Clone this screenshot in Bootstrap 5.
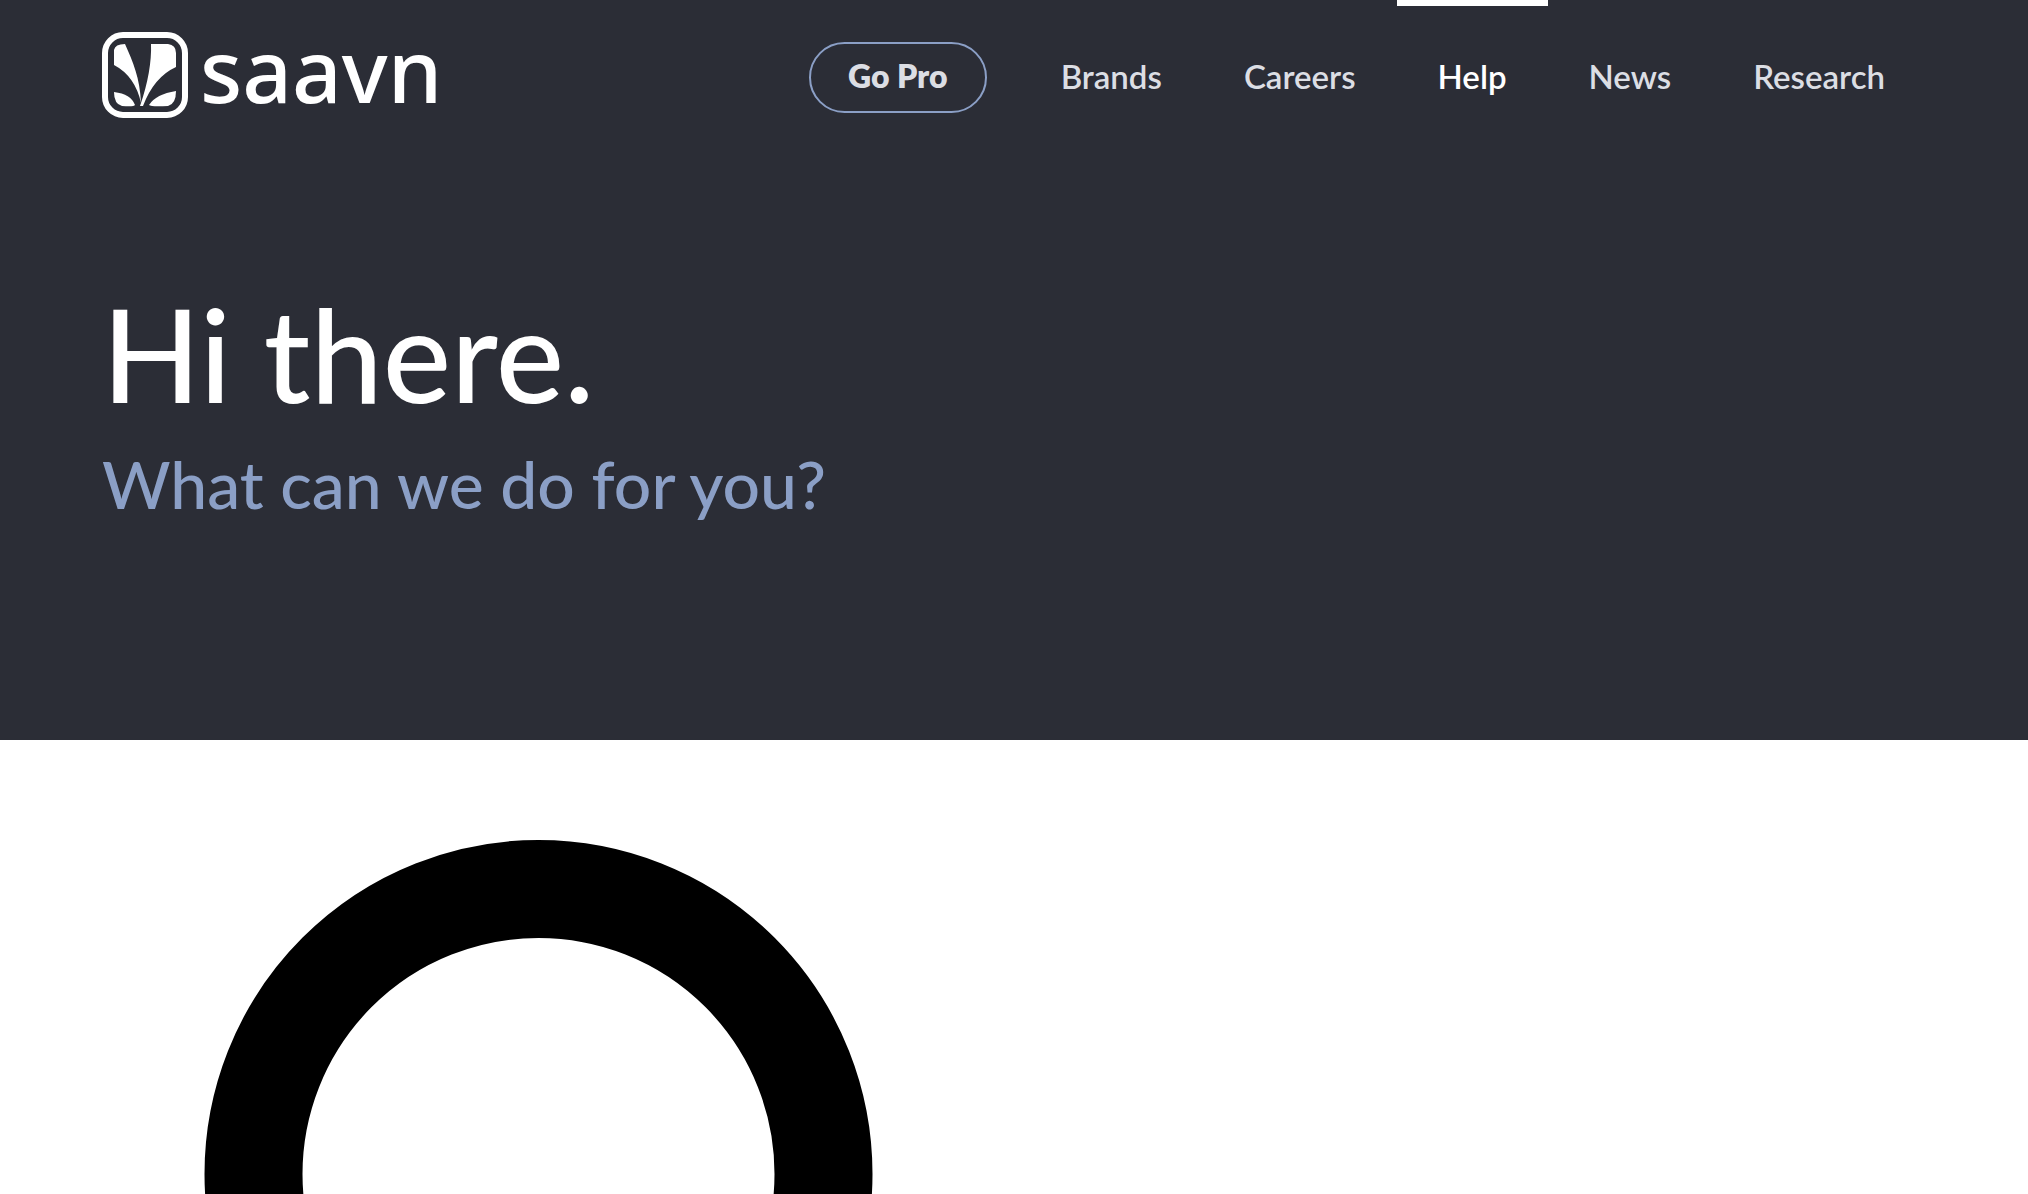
<!DOCTYPE html>
<html lang="en">
<head>
<meta charset="utf-8">
<meta name="viewport" content="width=device-width, initial-scale=1">
<title>Saavn Help</title>
<link href="https://cdn.jsdelivr.net/npm/bootstrap@5.3.0/dist/css/bootstrap.min.css" rel="stylesheet">
<style>
  body { font-family: Lato, sans-serif; background: #fff; }
  .page-gutter { padding-left: 102px; padding-right: 102px; }
  .site-hero { background: #2b2d36; height: 740px; }
  .site-brand { margin-top: 32px; gap: 12px; color: #fff; }
  .site-brand svg { width: 86px; height: 86px; }
  .brand-word { font: 500 87px/74px "Noto Sans", sans-serif; }
  .site-nav .nav-link { color: #dcdee4; font-size: 33px; line-height: 48px; font-weight: 600; padding: 46px 41px 48px; border-top: 6px solid transparent; }
  .site-nav .nav-link.active { color: #fff; border-top-color: #fff; }
  .btn-pro { color: #dcdee4; border: 2px solid #8b9fc6; border-radius: 36px; font-size: 32px; line-height: 48px; font-weight: 800; padding: 8px 37px 11px; margin: 42px 33px 0 0; }
  .hero-title { font-size: 129px; line-height: 156px; font-weight: 500; color: #fff; margin: 127px 0 0; }
  .hero-sub { font-size: 66px; line-height: 84px; font-weight: 500; color: #8b9fc6; margin: 11px 0 0; }
  .search-area { padding-top: 100px; }
  .search-glyph { width: 872px; height: 872px; }
</style>
</head>
<body class="vh-100 overflow-hidden d-flex flex-column">
<header class="site-hero page-gutter flex-shrink-0">
  <div class="d-flex justify-content-between align-items-start">
    <a class="site-brand d-flex align-items-start text-decoration-none" href="#" aria-label="Saavn home">
      <svg viewBox="0 0 86 86" aria-hidden="true">
        <rect x="3" y="3" width="80" height="80" rx="18" fill="none" stroke="#fff" stroke-width="6"/>
        <g fill="#fff">
          <path d="M12 33V18Q13 12 23 12C31 30 38 46 39 71Q33 44 12 33Z"/>
          <path d="M49 12H66Q74 13 74 21V35Q52 45 41 74H38Q50 39 49 12Z"/>
          <path d="M12 60Q29 62 33 73Q32 75 20 74Q12 72 12 60Z"/>
          <path d="M74 59Q54 62 47 73Q49 75 66 74Q74 72 74 59Z"/>
        </g>
      </svg>
      <span class="brand-word">saavn</span>
    </a>
    <nav class="site-nav nav flex-nowrap align-items-start" aria-label="Main">
      <button type="button" class="btn btn-pro text-nowrap">Go Pro</button>
      <a class="nav-link" href="#">Brands</a>
      <a class="nav-link" href="#">Careers</a>
      <a class="nav-link active" aria-current="page" href="#">Help</a>
      <a class="nav-link" href="#">News</a>
      <a class="nav-link" href="#">Research</a>
    </nav>
  </div>
  <h1 class="hero-title">Hi there.</h1>
  <p class="hero-sub">What can we do for you?</p>
</header>
<main class="search-area page-gutter overflow-hidden">
  <svg class="search-glyph d-block" viewBox="0 0 872 872" aria-hidden="true">
    <circle cx="436.500" cy="334" r="285" fill="none" stroke="#000" stroke-width="98"/>
    <path d="M640 538L800 698" stroke="#000" stroke-width="98" stroke-linecap="round"/>
  </svg>
</main>
<script src="https://cdn.jsdelivr.net/npm/bootstrap@5.3.0/dist/js/bootstrap.bundle.min.js"></script>
</body>
</html>
